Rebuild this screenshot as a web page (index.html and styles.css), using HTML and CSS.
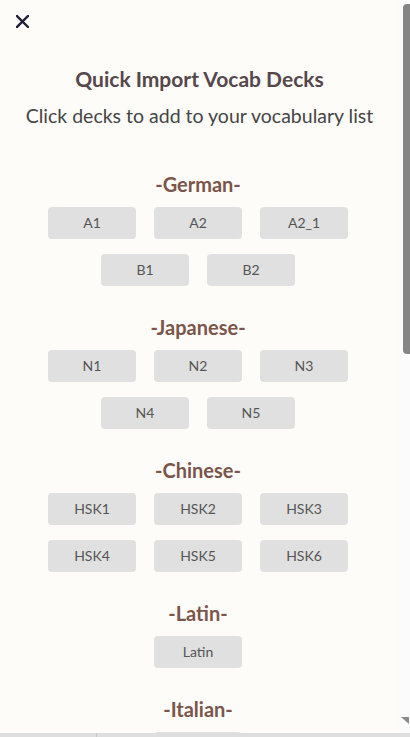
FILE: index.html
```html
<!DOCTYPE html>
<html lang="en">
<head>
<meta charset="utf-8">
<title>Quick Import Vocab Decks</title>
<link rel="stylesheet" href="styles.css">
</head>
<body>
<div class="modal">
  <div class="content">
    <button class="close" aria-label="Close">
      <svg width="13" height="13" viewBox="0 0 13 13"><path d="M1 1L12 12M12 1L1 12" stroke="#1e1f36" stroke-width="2.4" stroke-linecap="square"/></svg>
    </button>
    <h1 class="title">Quick Import Vocab Decks</h1>
    <p class="subtitle">Click decks to add to your vocabulary list</p>

    <section class="lang">
      <h2 class="lang-name">-German-</h2>
      <div class="decks">
        <button class="deck">A1</button>
        <button class="deck">A2</button>
        <button class="deck">A2_1</button>
        <button class="deck">B1</button>
        <button class="deck">B2</button>
      </div>
    </section>

    <section class="lang">
      <h2 class="lang-name">-Japanese-</h2>
      <div class="decks">
        <button class="deck">N1</button>
        <button class="deck">N2</button>
        <button class="deck">N3</button>
        <button class="deck">N4</button>
        <button class="deck">N5</button>
      </div>
    </section>

    <section class="lang">
      <h2 class="lang-name">-Chinese-</h2>
      <div class="decks">
        <button class="deck">HSK1</button>
        <button class="deck">HSK2</button>
        <button class="deck">HSK3</button>
        <button class="deck">HSK4</button>
        <button class="deck">HSK5</button>
        <button class="deck">HSK6</button>
      </div>
    </section>

    <section class="lang">
      <h2 class="lang-name">-Latin-</h2>
      <div class="decks">
        <button class="deck">Latin</button>
      </div>
    </section>

    <section class="lang">
      <h2 class="lang-name">-Italian-</h2>
      <div class="decks">
        <button class="deck">Italian</button>
      </div>
    </section>
  </div>

  <div class="scrollbar">
    <div class="thumb"></div>
    <svg class="arrow" width="8" height="7" viewBox="0 0 8 7"><path d="M0 0H8V7Z" fill="#8a8a8a"/></svg>
  </div>
  <div class="hbar"><div class="hbar-split"></div></div>
</div>
</body>
</html>
```

FILE: styles.css
```css
html, body {
  margin: 0;
  padding: 0;
  background: #fdfcf9;
}

.modal {
  position: relative;
  width: 410px;
  height: 737px;
  overflow: hidden;
  background: #fdfcf9;
  font-family: Lato, "Liberation Sans", sans-serif;
}

.content {
  width: 399px;
  height: 733px;
  overflow: hidden;
  display: flex;
  flex-direction: column;
  align-items: center;
}

.close {
  align-self: flex-start;
  margin: 15px 0 0 16px;
  padding: 0;
  width: 13px;
  height: 13px;
  border: 0;
  background: transparent;
  display: block;
  line-height: 0;
}

.title {
  margin: 38px 0 0;
  font-size: 21px;
  line-height: 25px;
  font-weight: 700;
  color: #55474a;
}

.subtitle {
  margin: 13px 0 0;
  font-size: 19.5px;
  line-height: 23px;
  font-weight: 400;
  color: #454545;
}

.lang {
  display: flex;
  flex-direction: column;
  align-items: center;
  padding-right: 3px;
  align-self: stretch;
}

.lang:first-of-type { margin-top: 45px; }
.lang + .lang { margin-top: 29px; }

.lang-name {
  margin: 0 0 11px;
  font-size: 20px;
  line-height: 24px;
  font-weight: 700;
  color: #7a5549;
}

.decks {
  width: 300px;
  display: flex;
  flex-wrap: wrap;
  justify-content: center;
  column-gap: 18px;
  row-gap: 15px;
}

.deck {
  width: 88px;
  height: 32px;
  padding: 0;
  border: 0;
  border-radius: 4px;
  background: #e0e0e0;
  color: #555555;
  font-family: Lato, "Liberation Sans", sans-serif;
  font-size: 14px;
  line-height: 32px;
}

.scrollbar {
  position: absolute;
  top: 0;
  right: 0;
  width: 11px;
  height: 733px;
  background: #fbfbfb;
}

.thumb {
  position: absolute;
  top: 4px;
  right: 0;
  width: 7px;
  height: 350px;
  background: #858585;
  border-radius: 4px 0 0 4px;
}

.arrow {
  position: absolute;
  right: 1px;
  top: 717px;
}

.hbar {
  position: absolute;
  left: 0;
  bottom: 0;
  width: 410px;
  height: 4px;
  background: #dedede;
}

.hbar-split {
  margin-left: 96px;
  width: 1px;
  height: 4px;
  background: #cacaca;
}
```
